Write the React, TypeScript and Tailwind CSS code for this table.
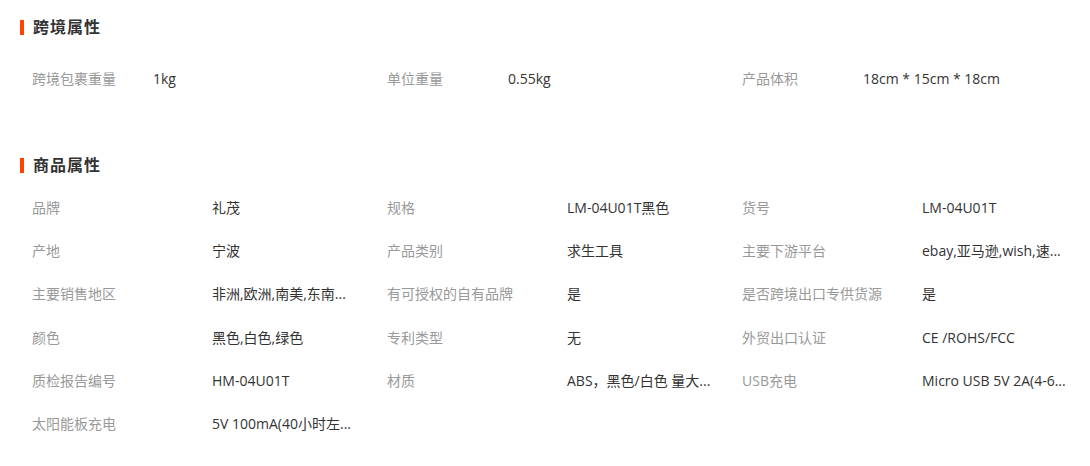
import React from "react";

type Attr = { label: string; value: string };

const crossBorder: Attr[] = [
  { label: "跨境包裹重量", value: "1kg" },
  { label: "单位重量", value: "0.55kg" },
  { label: "产品体积", value: "18cm * 15cm * 18cm" },
];

// values shown as the page truncates them
const product: Attr[] = [
  { label: "品牌", value: "礼茂" },
  { label: "规格", value: "LM-04U01T黑色" },
  { label: "货号", value: "LM-04U01T" },
  { label: "产地", value: "宁波" },
  { label: "产品类别", value: "求生工具" },
  { label: "主要下游平台", value: "ebay,亚马逊,wish,速..." },
  { label: "主要销售地区", value: "非洲,欧洲,南美,东南..." },
  { label: "有可授权的自有品牌", value: "是" },
  { label: "是否跨境出口专供货源", value: "是" },
  { label: "颜色", value: "黑色,白色,绿色" },
  { label: "专利类型", value: "无" },
  { label: "外贸出口认证", value: "CE /ROHS/FCC" },
  { label: "质检报告编号", value: "HM-04U01T" },
  { label: "材质", value: "ABS，黑色/白色 量大..." },
  { label: "USB充电", value: "Micro USB 5V 2A(4-6..." },
  { label: "太阳能板充电", value: "5V 100mA(40小时左..." },
];

const Title = ({ text }: { text: string }) => (
  <div className="flex items-center h-[20px]">
    <span className="w-[4px] h-[15px] bg-[#ff4400] mr-[9px]" />
    <span className="text-[16px] font-bold text-[#333] tracking-[1px]">{text}</span>
  </div>
);

const App = () => {
  return (
    <div
      className="w-[1090px] h-[466px] bg-white pl-[20px] pt-[17px]"
      style={{ fontFamily: '"Open Sans", "Noto Sans CJK SC", sans-serif' }}
    >
      <Title text="跨境属性" />
      <div className="grid grid-cols-[355px_355px_355px] mt-[32px] h-[20px] text-[14px]">
        {crossBorder.map((a) => (
          <div key={a.label} className="flex items-center pl-[12px] leading-[20px]">
            <span className="w-[121px] shrink-0 text-[#999]">{a.label}</span>
            <span className="text-[#333] whitespace-nowrap">{a.value}</span>
          </div>
        ))}
      </div>

      <div className="mt-[66px]">
        <Title text="商品属性" />
      </div>
      <div className="grid grid-cols-[355px_355px_355px] mt-[11px] text-[14px]">
        {product.map((a) => (
          <div key={a.label} className="flex items-center pl-[12px] h-[43.2px]">
            <span className="w-[180px] shrink-0 text-[#999]">{a.label}</span>
            <span className="text-[#333] whitespace-nowrap">{a.value}</span>
          </div>
        ))}
      </div>
    </div>
  );
};

export default App;
